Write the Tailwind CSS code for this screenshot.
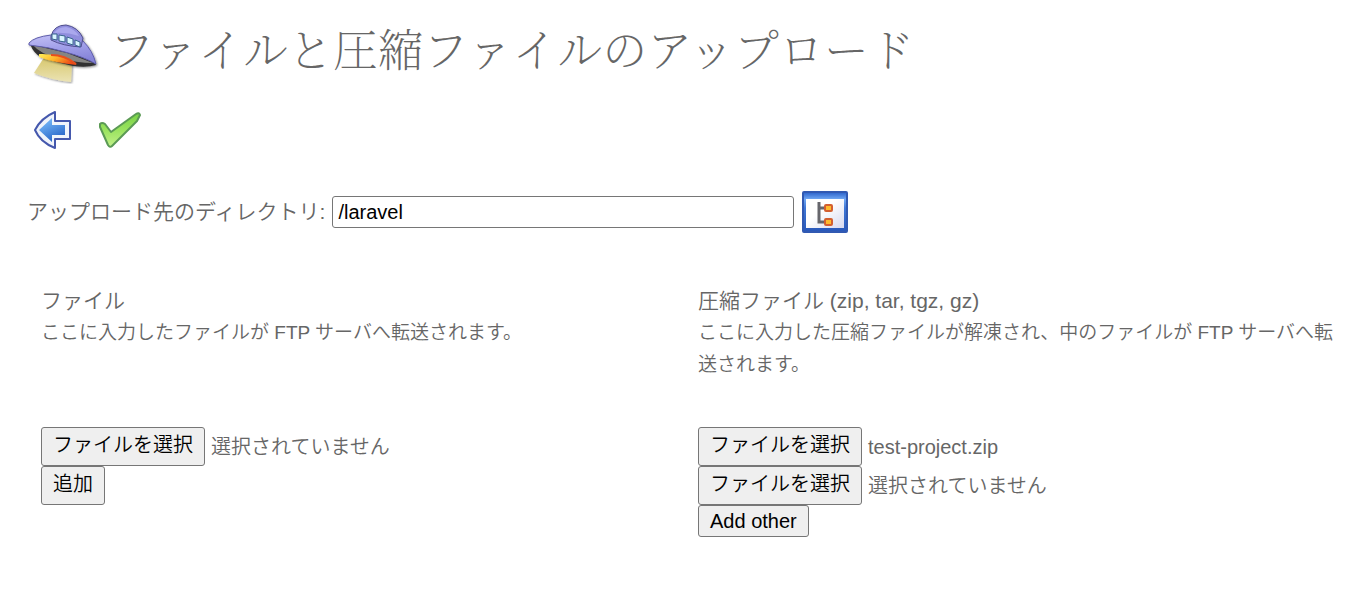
<!DOCTYPE html>
<html lang="ja">
<head>
<meta charset="utf-8">
<meta name="viewport" content="width=device-width, initial-scale=1">
<title>ファイルと圧縮ファイルのアップロード</title>
<script src="https://cdn.jsdelivr.net/npm/@tailwindcss/browser@4"></script>
</head>
<body class="bg-white px-[27px] pt-[18px] pb-14 font-['Liberation_Sans','Noto_Sans_CJK_JP',sans-serif] text-[21px] font-[350] text-[#666]">
<header class="flex items-end">
  <svg class="h-[66px] w-[72px] shrink-0" viewBox="0 -2 72 66" aria-hidden="true">
    <defs>
      <linearGradient id="hull" x1="0" y1="0" x2=".3" y2="1"><stop offset="0" stop-color="#c3c1f6"/><stop offset=".5" stop-color="#a3a1ea"/><stop offset="1" stop-color="#8684d8"/></linearGradient>
      <linearGradient id="beam" x1="0" y1="0" x2="0" y2="1"><stop offset="0" stop-color="#d6c568"/><stop offset="1" stop-color="#ebe3b4"/></linearGradient>
      <linearGradient id="glow" x1="0" y1="0" x2="1" y2=".4"><stop offset="0" stop-color="#fff05a"/><stop offset=".5" stop-color="#ffb52a"/><stop offset="1" stop-color="#ee4b18"/></linearGradient>
      <filter id="shade" x="-10%" y="-10%" width="130%" height="130%"><feDropShadow dx="1" dy="1" stdDeviation="1" flood-opacity=".45"/></filter>
    </defs>
    <path d="M18 36 7 53Q24 60 44 62L45 43Z" fill="url(#beam)" filter="url(#shade)"/>
    <g filter="url(#shade)">
      <path d="M3 24Q7 34 14 37 30 43 46 46 60 48 69 45L66 37 30 24Z" fill="#303030"/>
      <path d="M6 25Q22 29 40 33L66 43Q50 43 31 38 13 34 6 25Z" fill="#858583"/>
      <path d="M12 34Q34 33 50 45 28 43 12 37Z" fill="url(#glow)"/>
      <path d="M24 35Q38 35 49 44" fill="none" stroke="#e8501c" stroke-width="2"/>
      <path d="M2 23Q7 17 24 15L56 21Q66 31 69 44 57 37 38 32 22 27 2 25Z" fill="url(#hull)" stroke="#5f5dab"/>
      <path d="M24 16Q27 5 39 5 51 7 56 18L54 27Q36 26 24 20Z" fill="#908edd" stroke="#4f4e8d"/>
      <path d="M27 13Q31 7 39 7 48 9 52 16 40 12 27 13Z" fill="#aaa8ed"/>
      <path d="m25 14 5 0v6l-5-1zM32 15l6 1v6l-6-1zM40 17l6 2v6l-6-2zM48 20l5 2v5l-5-2z" fill="#d8f5ff" stroke="#38648c"/>
    </g>
  </svg>
  <h1 class="mb-[6px] ml-[10px] font-['Noto_Serif_CJK_JP','Noto_Sans_CJK_JP',serif] text-[45px] leading-[60px] font-extralight">ファイルと圧縮ファイルのアップロード</h1>
</header>
<form>
  <nav class="mt-[25px] flex gap-[25px] pl-[6px]">
    <button type="button" aria-label="戻る">
      <svg class="h-[42px] w-10" viewBox="0 0 40 42">
        <defs><linearGradient id="arrow" x1=".5" y1="0" x2="1" y2="1"><stop offset="0" stop-color="#72b4f6"/><stop offset="1" stop-color="#1753bd"/></linearGradient></defs>
        <path d="M2 21Q8 9 22 3V12H37V30H22V39Q7 33 2 21Z" fill="#f0f4fb" stroke="#4558ad" stroke-width="2" stroke-linejoin="round"/>
        <path d="M6 21 19 9V16H32V26H19V33Z" fill="url(#arrow)"/>
      </svg>
    </button>
    <button type="submit" aria-label="送信">
      <svg class="h-[42px] w-11" viewBox="0 0 44 42">
        <defs><linearGradient id="tick" x1="0" y1="1" x2="0" y2="0"><stop offset="0" stop-color="#c2f18a"/><stop offset=".5" stop-color="#9ae35f"/><stop offset="1" stop-color="#78d145"/></linearGradient></defs>
        <path d="M2 15Q4 13 7 15L13 23 38 5Q41 3 42 6L39 12 14 37Q12 39 10 36L2 18Z" fill="url(#tick)" stroke="#5b9a55" stroke-width="2" stroke-linejoin="round"/>
      </svg>
    </button>
  </nav>
  <div class="mt-[40px] flex items-center">
    <label for="directory" class="mr-[7px] leading-8 whitespace-nowrap">アップロード先のディレクトリ:</label>
    <input id="directory" type="text" value="/laravel" class="h-8 w-[462px] min-w-0 rounded-[3px] border border-[#767676] bg-white px-[5px] text-[20px] font-normal text-black">
    <button type="button" aria-label="ディレクトリを選択" class="ml-2 shrink-0">
      <svg class="h-[42px] w-[46px]" viewBox="0 0 46 42">
        <defs><linearGradient id="frame" x1="0" y1="0" x2="0" y2="1"><stop offset="0" stop-color="#285fc9"/><stop offset=".18" stop-color="#70a7f3"/><stop offset=".4" stop-color="#3f77d7"/><stop offset="1" stop-color="#2857b9"/></linearGradient><linearGradient id="pane" x1="0" y1="0" x2="1" y2="1"><stop offset=".4" stop-color="#fff"/><stop offset="1" stop-color="#d7d9ef"/></linearGradient></defs>
        <rect x="1" y="1" width="44" height="40" rx="1" fill="url(#frame)" stroke="#3159b2" stroke-width="2"/>
        <path d="M4 8h38v29H4z" fill="url(#pane)"/>
        <path d="M17 11v20h8M17 17h8" fill="none" stroke="#66666c" stroke-width="3"/>
        <rect x="23" y="14" width="7" height="6" rx="1" fill="#ffba2c" stroke="#d35f30" stroke-width="2"/>
        <rect x="23" y="28" width="7" height="6" rx="1" fill="#ffba2c" stroke="#d35f30" stroke-width="2"/>
      </svg>
    </button>
  </div>
  <div class="mt-[52px] grid grid-cols-2 gap-x-[15px] pl-[14px]">
    <section>
      <div class="min-h-[142px]">
        <h2 class="leading-8">ファイル</h2>
        <p class="text-[19px] leading-8">ここに入力したファイルが FTP サーバへ転送されます。</p>
      </div>
      <div class="flex items-center text-[20px]">
        <button type="button" class="h-[39px] rounded-[3px] border border-[#767676] bg-[#efefef] px-[11px] pb-1 text-black">ファイルを選択</button>
        <span class="ml-[6px]">選択されていません</span>
      </div>
      <button type="button" class="block h-[39px] rounded-[3px] border border-[#767676] bg-[#efefef] px-[11px] pb-1 text-[20px] text-black">追加</button>
    </section>
    <section>
      <div class="min-h-[142px]">
        <h2 class="leading-8">圧縮ファイル (zip, tar, tgz, gz)</h2>
        <p class="text-[19px] leading-8">ここに入力した圧縮ファイルが解凍され、中のファイルが FTP サーバへ転送されます。</p>
      </div>
      <div class="flex items-center text-[20px]">
        <button type="button" class="h-[39px] rounded-[3px] border border-[#767676] bg-[#efefef] px-[11px] pb-1 text-black">ファイルを選択</button>
        <span class="ml-[6px]">test-project.zip</span>
      </div>
      <div class="flex items-center text-[20px]">
        <button type="button" class="h-[39px] rounded-[3px] border border-[#767676] bg-[#efefef] px-[11px] pb-1 text-black">ファイルを選択</button>
        <span class="ml-[6px]">選択されていません</span>
      </div>
      <button type="button" class="block h-8 rounded-[3px] border border-[#767676] bg-[#efefef] px-[11px] text-[20px] text-black">Add other</button>
    </section>
  </div>
</form>
</body>
</html>
